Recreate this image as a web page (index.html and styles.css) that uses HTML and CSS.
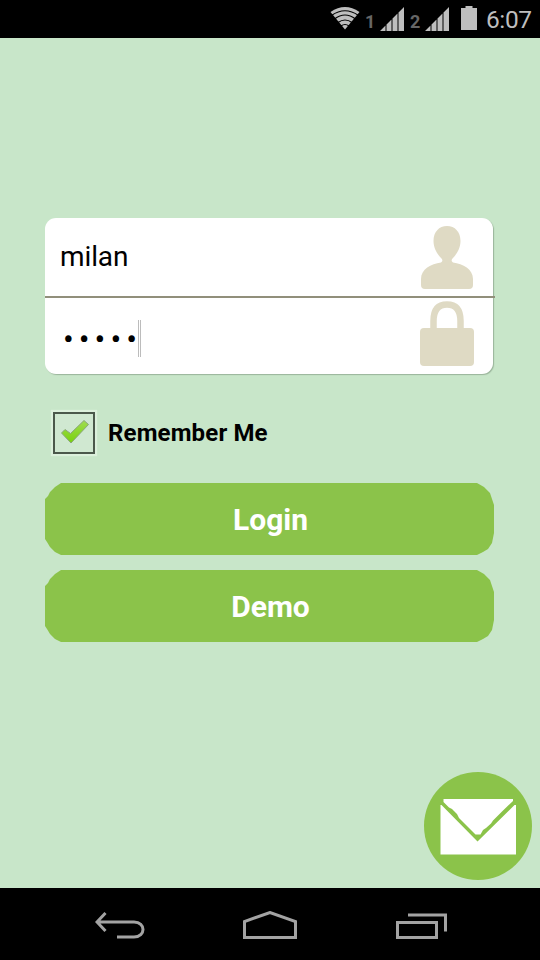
FILE: index.html
```html
<!DOCTYPE html>
<html lang="en">
<head>
<meta charset="utf-8">
<title>Login</title>
<link rel="stylesheet" href="styles.css">
</head>
<body>
<div class="screen">
  <header class="status">
    <svg class="wifi" width="30" height="24" viewBox="0 0 30 24">
      <path class="fill" d="M.5 6Q15-4 29.500 6L15 23.500Z"/>
      <path class="gap" d="M1.500 9.500Q15 0 28.500 9.500M4.500 13Q15 5 25.500 13M8 16.500Q15 11.500 22 16.500M11 20Q15 17 19 20"/>
    </svg>
    <span class="sim">1</span>
    <svg class="signal" width="24" height="24" viewBox="0 0 24 24">
      <path class="fill" d="M0 24L5.500 18.500V24ZM6.500 24V17.500L11.500 12.500V24ZM12.500 24V11.500L17.500 6.500V24ZM18.500 24V5.500L24 0V24Z"/>
    </svg>
    <span class="sim sim-two">2</span>
    <svg class="signal" width="24" height="24" viewBox="0 0 24 24">
      <path class="fill" d="M0 24L5.500 18.500V24ZM6.500 24V17.500L11.500 12.500V24ZM12.500 24V11.500L17.500 6.500V24ZM18.500 24V5.500L24 0V24Z"/>
    </svg>
    <svg class="battery" width="16" height="24" viewBox="0 0 16 24">
      <path class="fill" d="M4.500 0H11.500V2H16V24H0V2H4.500Z"/>
    </svg>
    <span class="clock">6:07</span>
  </header>

  <main class="content">
    <section class="fields">
      <div class="field">
        <span class="username">milan</span>
        <svg class="field-icon" width="54" height="64" viewBox="0 0 54 64">
          <path class="tan" d="M27 0C35 0 40.500 6 40.500 15C40.500 23 36 29 32.500 32.500Q30.500 35 33 36.500C43 38 53 43 53 53V59Q53 63 49 63H5Q1 63 1 59V53C1 43 11 38 21 36.500Q23.500 35 21.500 32.500C18 29 13.500 23 13.500 15C13.500 6 19 0 27 0Z"/>
        </svg>
      </div>
      <div class="divider"></div>
      <div class="field">
        <span class="password">•••••</span><span class="cursor"></span>
        <svg class="field-icon lock" width="54" height="66" viewBox="0 0 54 66">
          <path class="shackle" d="M13.500 29V20C13.500 9 18 3.500 27 3.500S40.500 9 40.500 20V29"/>
          <rect class="tan" x="0" y="27" width="54" height="38" rx="4"/>
        </svg>
      </div>
    </section>

    <div class="remember">
      <span class="checkbox">
        <svg width="30" height="26" viewBox="0 0 30 26">
          <defs><linearGradient id="leaf" x2="0" y2="1"><stop offset="0" stop-color="#a0dc50"/><stop offset="1" stop-color="#78d20c"/></linearGradient></defs>
          <path class="tick" fill="url(#leaf)" d="M1.500 14L5 10.500L10.500 14.500L24 1.500L28.500 5.500L11 24Z"/>
        </svg>
      </span>
      <span class="remember-label">Remember Me</span>
    </div>

    <div class="button">
      <svg class="button-shape" width="449" height="72" viewBox="0 0 449 72"><path d="M16 0H432L439 4L445 10L447 16L449 22V50L447 60L443 66L438 69L432 72H16L10 69L5 64L2 59L0 56V16L3 13L5 9L10 4Z"/></svg>
      <span class="login">Login</span>
    </div>
    <div class="button">
      <svg class="button-shape" width="449" height="72" viewBox="0 0 449 72"><path d="M16 0H432L439 4L445 10L447 16L449 22V50L447 60L443 66L438 69L432 72H16L10 69L5 64L2 59L0 56V16L3 13L5 9L10 4Z"/></svg>
      <span class="demo">Demo</span>
    </div>

    <svg class="mail" width="108" height="108" viewBox="0 0 108 108">
      <circle class="mail-disc" cx="54" cy="54" r="54"/>
      <path class="mail-paper" d="M19.500 27H89V29L78 39.500L69 48.500L67 51.500L62 56L59 58L56.500 62.500H51.500L35 46L33 42L28 37L25 35.500L19.500 30Z"/>
      <path class="mail-paper" d="M16.500 33H17.500L53.500 69.500L90.500 33H92V82.500H16.500Z"/>
    </svg>
  </main>

  <nav class="navbar">
    <svg class="back" width="50" height="28" viewBox="0 0 50 28">
      <path d="M10.500 1L2 10L10.500 19M2 10H39C51 10 51 25 39 25H22"/>
    </svg>
    <svg class="home" width="54" height="28" viewBox="0 0 54 28">
      <path d="M1.500 26.500V10.500L27 1.500L52.500 10.500V26.500Z"/>
    </svg>
    <svg class="recent" width="51" height="26" viewBox="0 0 51 26">
      <path d="M1.500 9.500H40.500V24.500H1.500ZM12 2H49.500V18.500"/>
    </svg>
  </nav>
</div>
</body>
</html>
```
FILE: styles.css
```css
* { box-sizing: border-box; }
body { margin: 0; font-family: Roboto, sans-serif; }
svg { display: block; flex: none; }

.screen {
  width: 540px;
  height: 960px;
  display: flex;
  flex-direction: column;
  background: #c8e6c9;
}

.status {
  height: 38px;
  flex: none;
  display: flex;
  background: #000;
  color: #bebebe;
  padding-left: 330px;
}
.fill { fill: #bebebe; }
.gap { fill: none; stroke: #000; stroke-width: 1.2; }
.wifi { margin-top: 6px; }
.sim {
  width: 20px;
  padding: 11px 0 0 5px;
  font-size: 18px;
  line-height: 21px;
  font-weight: 700;
  color: #666;
}
.sim-two { width: 21px; padding-left: 6px; }
.signal { margin-top: 7px; }
.battery { margin: 6px 0 0 12px; }
.clock {
  margin: 6px 0 0 9px;
  font-size: 24.500px;
  line-height: 28px;
  letter-spacing: -0.4px;
}

.content {
  position: relative;
  flex: 1;
  padding: 180px 46px 0 45px;
}

.fields {
  width: 448px;
  height: 156px;
  background: #fff;
  border-radius: 11px;
  box-shadow: 1px 1px 1px rgba(70, 90, 70, 0.35);
}
.field {
  height: 78px;
  display: flex;
  padding-right: 19px;
}
.username {
  padding: 22px 0 0 15px;
  font-size: 28px;
  line-height: 33px;
  letter-spacing: -0.1px;
  color: #000;
}
.field-icon { margin: 8px 0 0 auto; }
.lock { margin-top: 3px; }
.tan { fill: #dfdac4; }
.shackle { fill: none; stroke: #dfdac4; stroke-width: 6.5; }
.divider { width: 450px; height: 2px; background: #918f7b; }
.password {
  width: 93px;
  padding: 25px 0 0 18px;
  font-size: 32px;
  line-height: 33px;
  letter-spacing: 5px;
  white-space: nowrap;
}
.cursor {
  width: 3px;
  height: 37px;
  margin-top: 22px;
  border: solid #bcbcbc;
  border-width: 0 1px;
}

.remember {
  display: flex;
  margin: 38px 0 0 8px;
}
.checkbox {
  width: 42px;
  height: 42px;
  border: 2px solid #4b584b;
  background: #d0e8d1;
  box-shadow: 0 0 1px 2px #dcf0dc;
  padding: 5px 0 0 5px;
}
.tick { stroke: #8aa67c; stroke-width: 1; }
.remember-label {
  padding: 7px 0 0 13px;
  font-size: 24px;
  line-height: 29px;
  letter-spacing: 0.15px;
  font-weight: 700;
}

.button {
  height: 72px;
  display: grid;
  place-items: center;
  margin-top: 15px;
  color: #fff;
  font-size: 30px;
  line-height: 36px;
  font-weight: 700;
}
.remember + .button { margin-top: 29px; }
.button > * { grid-area: 1 / 1; }
.button > span { padding: 2px 0 0 2px; }
.button-shape { fill: #8bc34a; }

.mail { position: absolute; right: 8px; bottom: 8px; }
.mail-disc { fill: #8bc34a; }
.mail-paper { fill: #fff; }

.navbar {
  height: 72px;
  flex: none;
  display: flex;
  background: #000;
  padding-left: 95px;
}
.navbar svg { fill: none; stroke: #a3a3a3; stroke-width: 3; }
.back { margin-top: 24px; }
.home { margin: 23px 0 0 98px; }
.recent { margin: 25px 0 0 99px; }
```
